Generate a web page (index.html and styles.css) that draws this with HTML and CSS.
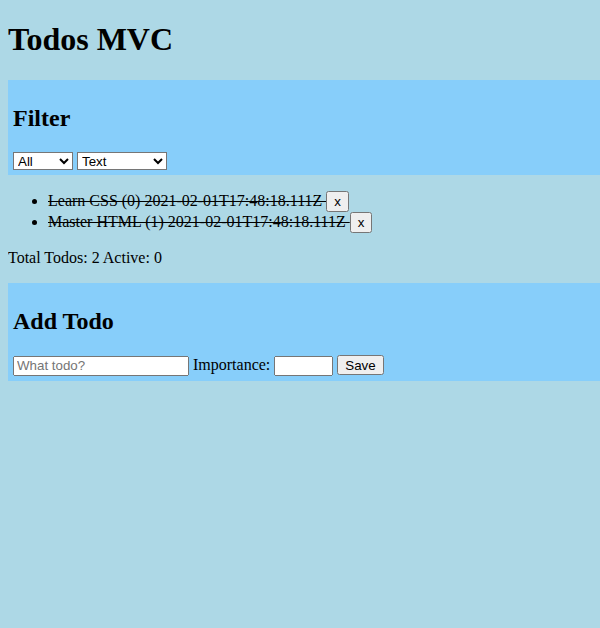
FILE: index.html
```html
<!DOCTYPE html>
<html>
<head>
<meta charset="utf-8">
<link rel="stylesheet" href="styles.css">
</head>
<body>
<h1 class="title">Todos MVC</h1>
<section class="panel">
  <h2 class="panel-title">Filter</h2>
  <select class="ctl sel sel-status"><option>All</option><option>Active</option><option>Completed</option></select>
  <select class="ctl sel sel-sort"><option>Text</option><option>Importance</option></select>
</section>
<ul class="todos">
  <li class="todo done">Learn CSS (0) 2021-02-01T17:48:18.111Z <button class="ctl btn">x</button></li>
  <li class="todo done">Master HTML (1) 2021-02-01T17:48:18.111Z <button class="ctl btn">x</button></li>
</ul>
<p class="summary">Total Todos: 2 Active: 0</p>
<section class="panel">
  <h2 class="panel-title">Add Todo</h2>
  <input class="ctl field in-text" type="text" placeholder="What todo?"> Importance: <input class="ctl field in-num" type="text"> <button class="ctl btn btn-save">Save</button>
</section>
</body>
</html>
```
FILE: styles.css
```css
html, body {
  background: #add8e6;
}
body {
  margin: 0 0 8px 8px;
  font-family: "Liberation Serif", "Times New Roman", serif;
  font-size: 16px;
  color: #000;
}
.title {
  font-size: 32px;
  line-height: 36.8px;
  margin: 21.44px 0;
}
.panel {
  background: #87cefa;
  padding: 5px;
}
.panel-title {
  font-size: 24px;
  line-height: 27.6px;
  margin: 19.92px 0;
}
.ctl {
  font-family: "Liberation Sans", Arial, sans-serif;
  font-size: 13.333px;
  color: #000;
}
.sel {
  border-radius: 0;
  border: 1px solid #767676;
  background-color: #fff;
  height: 18px;
  vertical-align: bottom;
}
.sel-status { width: 60px; }
.sel-sort { width: 90px; }
.todos {
  margin: 16px 0;
  padding-left: 40px;
}
.done {
  text-decoration: line-through;
}
.field {
  box-sizing: border-box;
  height: 20px;
}
.in-text { width: 176px; }
.in-num { width: 59px; }
.btn-save { height: 20px; }
.summary { margin: 16px 0; }
```
